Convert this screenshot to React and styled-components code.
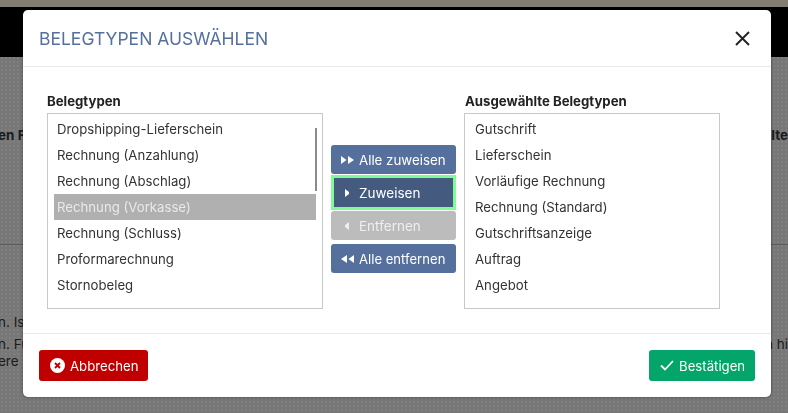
import React from 'react';
import styled, { createGlobalStyle } from 'styled-components';

const GlobalStyle = createGlobalStyle`
  html, body {
    margin: 0;
    padding: 0;
    height: 100%;
    overflow: hidden;
    font-family: Inter, "Liberation Sans", sans-serif;
  }
`;

const Page = styled.div`
  width: 788px;
  height: 413px;
  overflow: hidden;
  background-color: #777777;
  background-image: radial-gradient(rgba(255, 255, 255, 0.07) 0.7px, transparent 0.8px);
  background-size: 4px 4px;
  color: #1b1b1b;
`;

const TopStrip = styled.div`
  height: 7px;
  background: #827d70;
`;

const BlackBar = styled.div`
  height: 50px;
  background: #000;
`;

const PageRow = styled.div`
  display: flex;
  justify-content: space-between;
  margin-left: -2px;
  padding-top: ${p => p.$top}px;
  font-size: 13.5px;
  line-height: 17px;
  font-weight: ${p => (p.$bold ? 700 : 400)};
`;

const PageLine = styled.div`
  margin-top: 100px;
  height: 1px;
  background: #5c5c5c;
`;

const Overlay = styled.div`
  position: fixed;
  inset: 0;
  padding: 10px 0 0 23px;
`;

const Modal = styled.div.attrs({ role: 'dialog' })`
  width: 748px;
  height: 387px;
  box-sizing: border-box;
  display: flex;
  flex-direction: column;
  background: #fff;
  border-radius: 5px;
  box-shadow: 0 0 3px rgba(0, 0, 0, 0.5);
`;

const ModalHeader = styled.header`
  height: 57px;
  flex: none;
  box-sizing: border-box;
  display: flex;
  align-items: center;
  justify-content: space-between;
  padding: 0 21px 0 16px;
  border-bottom: 1px solid #eaeaea;
`;

const Title = styled.h2`
  margin: 0;
  font-size: 17.5px;
  font-weight: 400;
  color: #56709e;
`;

const CloseBtn = styled.button`
  display: flex;
  padding: 0;
  border: none;
  background: none;
  color: #222;
  cursor: pointer;
`;

const ModalBody = styled.div`
  flex: 1;
  display: flex;
  gap: 8px;
  padding: 26px 24px 0;
`;

const Column = styled.div`
  width: ${p => p.$width}px;
  flex: none;
`;

const Label = styled.div`
  height: 20px;
  padding-left: ${p => p.$inset || 0}px;
  font-size: 13.2px;
  line-height: 16px;
  font-weight: 700;
  color: #222;
`;

const ListBox = styled.ul`
  position: relative;
  height: 196px;
  box-sizing: border-box;
  margin: 0;
  padding: 2px 6px;
  list-style: none;
  overflow: hidden;
  border: 1px solid #c8c8c8;
`;

const Item = styled.li`
  height: 26px;
  padding-left: ${p => p.$inset}px;
  font-size: 13.2px;
  line-height: 26px;
  white-space: nowrap;
  color: ${p => (p.$selected ? '#e9e9e9' : '#333')};
  background: ${p => (p.$selected ? '#b0b0b0' : 'transparent')};
`;

const ScrollThumb = styled.div`
  position: absolute;
  top: 14px;
  right: 5px;
  width: 2px;
  height: 63px;
  background: #8a8a8a;
`;

const Actions = styled.div`
  width: 125px;
  flex: none;
  display: flex;
  flex-direction: column;
  gap: 4px;
  padding-top: 52px;
`;

const MoveBtn = styled.button`
  height: 29px;
  box-sizing: border-box;
  display: flex;
  align-items: center;
  gap: ${p => p.$gap}px;
  padding: 0 0 0 ${p => p.$left}px;
  border: none;
  border-radius: 3px;
  font-family: inherit;
  font-size: ${p => p.$size}px;
  color: ${p => (p.disabled ? '#eeeeee' : '#fff')};
  background: ${p => (p.disabled ? '#bcbcbc' : '#56709e')};
`;

const FocusedMoveBtn = styled(MoveBtn)`
  height: 35px;
  margin: -3px 0;
  border: 3px solid #7ffb98;
  border-radius: 0;
  background: #445a7e;
`;

const ModalFooter = styled.footer`
  height: 64px;
  flex: none;
  box-sizing: border-box;
  display: flex;
  align-items: flex-start;
  justify-content: space-between;
  padding: 16px 16px 0;
  border-top: 1px solid #eaeaea;
`;

const FooterBtn = styled.button`
  width: ${p => p.$width}px;
  height: 31px;
  box-sizing: border-box;
  display: flex;
  align-items: center;
  gap: 5px;
  padding: 0 0 0 ${p => p.$left}px;
  border: none;
  border-radius: 3px;
  font-family: inherit;
  font-size: 13.2px;
  color: #fff;
  background: ${p => p.$bg};
`;

const Triangles = ({ count, flip }) => (
  <svg
    width={count === 2 ? 13 : 4}
    height="8"
    viewBox={count === 2 ? '0 0 13 8' : '0 0 4 8'}
    fill="currentColor"
    style={flip ? { transform: 'scaleX(-1)' } : undefined}
  >
    <path d="M0 0l5.5 4L0 8z" />
    {count === 2 && <path d="M7 0l6 4-6 4z" />}
  </svg>
);

const CancelIcon = () => (
  <svg width="15" height="15" viewBox="0 0 15 15">
    <circle cx="7.5" cy="7.5" r="7.5" fill="#fff" />
    <path d="M5 5l5 5M10 5l-5 5" stroke="#c00000" strokeWidth="1.8" />
  </svg>
);

const CheckIcon = () => (
  <svg width="14" height="11" viewBox="0 0 14 11" fill="none" stroke="#fff" strokeWidth="1.8">
    <path d="M1 5.5l4 4L13 1" />
  </svg>
);

const CloseIcon = () => (
  <svg width="15" height="15" viewBox="0 0 15 15" fill="none" stroke="currentColor" strokeWidth="1.9">
    <path d="M1 1l13 13M14 1L1 14" />
  </svg>
);

const available = [
  'Dropshipping-Lieferschein',
  'Rechnung (Anzahlung)',
  'Rechnung (Abschlag)',
  'Rechnung (Vorkasse)',
  'Rechnung (Schluss)',
  'Proformarechnung',
  'Stornobeleg',
];

const chosen = [
  'Gutschrift',
  'Lieferschein',
  'Vorläufige Rechnung',
  'Rechnung (Standard)',
  'Gutschriftsanzeige',
  'Auftrag',
  'Angebot',
];

export default function App() {
  return (
    <>
      <GlobalStyle />
      <Page>
        <TopStrip />
        <BlackBar />
        <PageRow $bold $top={70}>
          <span>en F</span>
          <span>lte</span>
        </PageRow>
        <PageLine />
        <PageRow $top={69}>
          <span>n. Ist</span>
        </PageRow>
        <PageRow $top={5}>
          <span>n. Fü</span>
          <span>n hi</span>
        </PageRow>
        <PageRow $top={0}>
          <span>ere</span>
        </PageRow>
        <Overlay>
          <Modal>
            <ModalHeader>
              <Title>BELEGTYPEN AUSWÄHLEN</Title>
              <CloseBtn aria-label="Schließen">
                <CloseIcon />
              </CloseBtn>
            </ModalHeader>
            <ModalBody>
              <Column $width={276}>
                <Label>Belegtypen</Label>
                <ListBox>
                  {available.map(name => (
                    <Item key={name} $inset={3} $selected={name === 'Rechnung (Vorkasse)'}>
                      {name}
                    </Item>
                  ))}
                  <ScrollThumb />
                </ListBox>
              </Column>
              <Actions>
                <MoveBtn $left={10} $gap={5} $size={13.3}>
                  <Triangles count={2} />
                  Alle zuweisen
                </MoveBtn>
                <FocusedMoveBtn $left={11} $gap={10} $size={13.5}>
                  <Triangles count={1} />
                  Zuweisen
                </FocusedMoveBtn>
                <MoveBtn disabled $left={14} $gap={10} $size={13.5}>
                  <Triangles count={1} flip />
                  Entfernen
                </MoveBtn>
                <MoveBtn $left={10} $gap={5} $size={13.1}>
                  <Triangles count={2} flip />
                  Alle entfernen
                </MoveBtn>
              </Actions>
              <Column $width={256}>
                <Label $inset={1}>Ausgewählte Belegtypen</Label>
                <ListBox>
                  {chosen.map(name => (
                    <Item key={name} $inset={4}>{name}</Item>
                  ))}
                </ListBox>
              </Column>
            </ModalBody>
            <ModalFooter>
              <FooterBtn $width={109} $left={11} $bg="#c00000">
                <CancelIcon />
                Abbrechen
              </FooterBtn>
              <FooterBtn $width={106} $left={11} $bg="#03a56b">
                <CheckIcon />
                Bestätigen
              </FooterBtn>
            </ModalFooter>
          </Modal>
        </Overlay>
      </Page>
    </>
  );
}
